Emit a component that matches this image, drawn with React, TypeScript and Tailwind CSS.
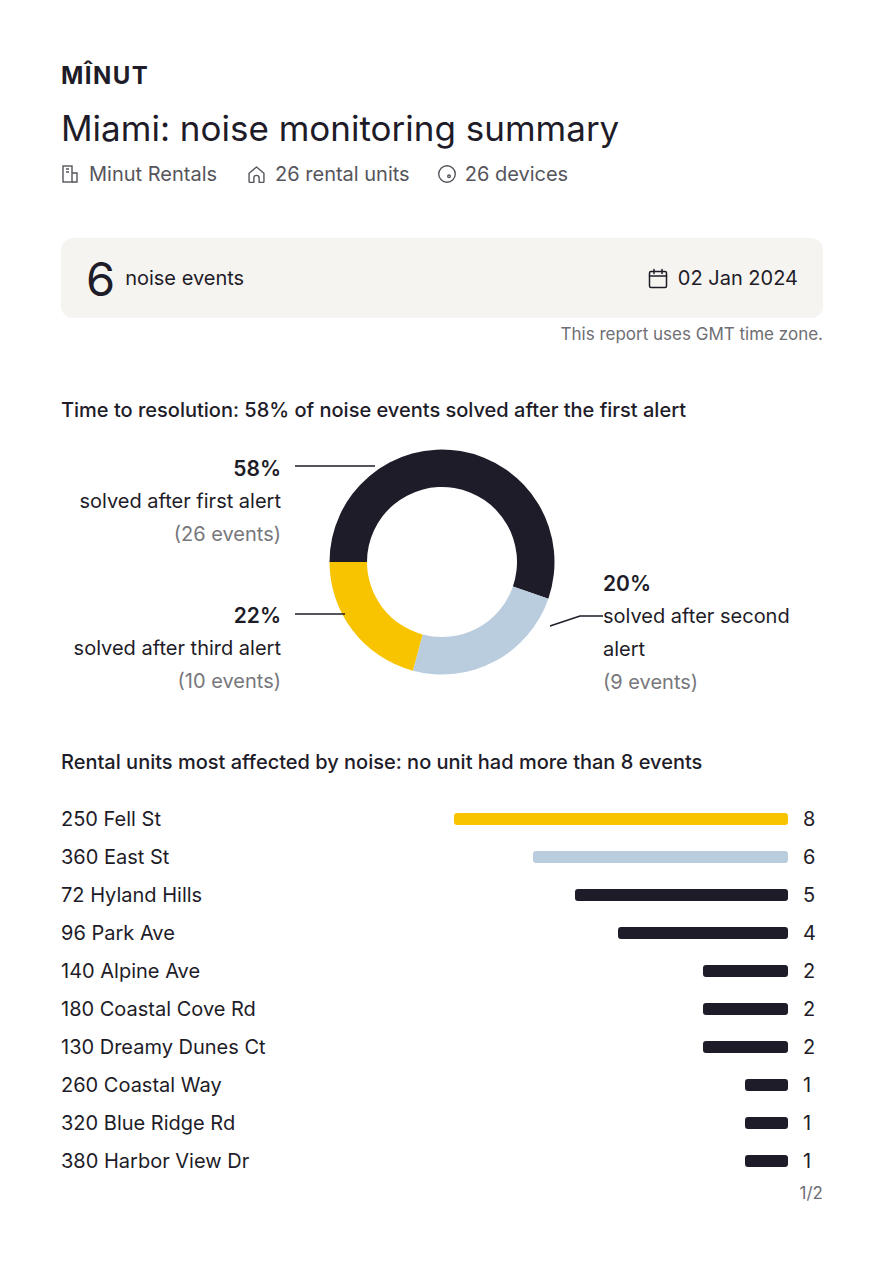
import React from 'react';

const DARK = '#1e1c28';
const YELLOW = '#f8c400';
const BLUE = '#b9cddf';

type Unit = { name: string; count: number; width: number; color: string };

// bar widths in px, measured so the longest (8) fills the track
const units: Unit[] = [
  { name: '250 Fell St', count: 8, width: 334, color: 'bg-[#f8c400]' },
  { name: '360 East St', count: 6, width: 255, color: 'bg-[#b9cddf]' },
  { name: '72 Hyland Hills', count: 5, width: 213, color: 'bg-[#1e1c28]' },
  { name: '96 Park Ave', count: 4, width: 170, color: 'bg-[#1e1c28]' },
  { name: '140 Alpine Ave', count: 2, width: 85, color: 'bg-[#1e1c28]' },
  { name: '180 Coastal Cove Rd', count: 2, width: 85, color: 'bg-[#1e1c28]' },
  { name: '130 Dreamy Dunes Ct', count: 2, width: 85, color: 'bg-[#1e1c28]' },
  { name: '260 Coastal Way', count: 1, width: 43, color: 'bg-[#1e1c28]' },
  { name: '320 Blue Ridge Rd', count: 1, width: 43, color: 'bg-[#1e1c28]' },
  { name: '380 Harbor View Dr', count: 1, width: 43, color: 'bg-[#1e1c28]' },
];

// angles in degrees, clockwise from 12 o'clock
function sector(cx: number, cy: number, r0: number, r1: number, a0: number, a1: number) {
  const p = (r: number, a: number) => {
    const rad = ((a - 90) * Math.PI) / 180;
    return `${(cx + r * Math.cos(rad)).toFixed(2)} ${(cy + r * Math.sin(rad)).toFixed(2)}`;
  };
  const large = a1 - a0 > 180 ? 1 : 0;
  return `M ${p(r1, a0)} A ${r1} ${r1} 0 ${large} 1 ${p(r1, a1)} L ${p(r0, a1)} A ${r0} ${r0} 0 ${large} 0 ${p(r0, a0)} Z`;
}

function BuildingIcon() {
  return (
    <svg width="18" height="20" viewBox="0 0 18 20" fill="none" stroke="#55555c" strokeWidth="1.4">
      <rect x="2" y="2" width="9" height="16" />
      <path d="M11 9h5v9h-5" />
      <path d="M5 5h3M5 8h3" />
    </svg>
  );
}

function HouseIcon() {
  return (
    <svg width="21" height="21" viewBox="0 0 24 24" fill="none" stroke="#55555c" strokeWidth="1.6" strokeLinejoin="round">
      <path d="M3.5 10.5 12 3.5l8.5 7V20a1 1 0 0 1-1 1H15v-5a3 3 0 0 0-6 0v5H4.5a1 1 0 0 1-1-1z" />
    </svg>
  );
}

function DeviceIcon() {
  return (
    <svg width="20" height="20" viewBox="0 0 20 20" fill="none" stroke="#55555c" strokeWidth="1.4">
      <circle cx="10" cy="10" r="8.3" />
      <circle cx="12" cy="12.3" r="1.3" />
    </svg>
  );
}

function CalendarIcon() {
  return (
    <svg width="20" height="21" viewBox="0 0 20 21" fill="none" stroke={DARK} strokeWidth="1.5" strokeLinecap="round">
      <rect x="1.5" y="3.5" width="17" height="16" rx="1.5" />
      <path d="M1.5 8h17M6 1.5v4M14 1.5v4" />
    </svg>
  );
}

function Donut() {
  const cx = 161;
  const cy = 113;
  return (
    <svg width="322" height="250" viewBox="0 0 322 250" className="shrink-0">
      <path d={sector(cx, cy, 75, 112.5, 270, 469)} fill={DARK} />
      <path d={sector(cx, cy, 75, 112.5, 109, 195)} fill={BLUE} />
      <path d={sector(cx, cy, 75, 112.5, 195, 270)} fill={YELLOW} />
      <path d="M14 17H94" stroke={DARK} strokeWidth="1.4" />
      <path d="M14 165H64" stroke={DARK} strokeWidth="1.4" />
      <path d="M269 177L299 167H322" stroke={DARK} strokeWidth="1.4" fill="none" />
    </svg>
  );
}

export default function App() {
  return (
    <div className="min-h-[1268px] w-[884px] bg-white px-[61px] pt-[62px] font-['Inter',sans-serif] text-[#1e1c28]">
      {/* logo */}
      <div className="text-[24px] font-bold leading-[28px] tracking-[0.06em]">MÎNUT</div>
      <h1 className="mt-[18px] text-[35px] font-normal leading-[40px]">Miami: noise monitoring summary</h1>
      {/* meta */}
      <div className="mt-[12px] flex items-center text-[20px] leading-[28px] text-[#55555c]">
        <span className="flex items-center gap-[10px]">
          <BuildingIcon />
          Minut Rentals
        </span>
        <span className="ml-[29px] flex items-center gap-[8px]">
          <HouseIcon />
          26 rental units
        </span>
        <span className="ml-[27px] flex items-center gap-[8px]">
          <DeviceIcon />
          26 devices
        </span>
      </div>

      {/* summary box */}
      <div className="mt-[50px] flex h-[80px] items-center justify-between rounded-[12px] bg-[#f6f4f0] px-[25px]">
        <div className="flex items-center gap-[10px]">
          <span className="text-[47px] leading-none">6</span>
          <span className="text-[20px]">noise events</span>
        </div>
        <div className="flex items-center gap-[10px] text-[20px]">
          <CalendarIcon />
          02 Jan 2024
        </div>
      </div>
      <div className="mt-[6px] text-right text-[17px] leading-[20px] text-[#6e6e73]">
        This report uses GMT time zone.
      </div>

      {/* time to resolution */}
      <h2 className="mt-[54px] text-[20px] font-medium leading-[24px]">
        Time to resolution: 58% of noise events solved after the first alert
      </h2>
      <div className="mt-[27px] flex h-[250px] items-start">
        <div className="flex w-[220px] flex-col pt-[3px] text-right text-[20px] leading-[33px]">
          <span className="text-[21px] font-semibold">58%</span>
          <span>solved after first alert</span>
          <span className="text-[#77777c]">(26 events)</span>
          <span className="mt-[48px] text-[21px] font-semibold">22%</span>
          <span>solved after third alert</span>
          <span className="text-[#77777c]">(10 events)</span>
        </div>
        <Donut />
        <div className="flex w-[200px] flex-col pt-[118px] text-[20px] leading-[33px]">
          <span className="text-[21px] font-semibold">20%</span>
          <span>solved after second alert</span>
          <span className="text-[#77777c]">(9 events)</span>
        </div>
      </div>

      {/* most affected units */}
      <h2 className="mt-[51px] text-[20px] font-medium leading-[24px]">
        Rental units most affected by noise: no unit had more than 8 events
      </h2>
      <div className="mt-[26px] flex flex-col">
        {units.map((u) => (
          <div key={u.name} className="flex h-[38px] items-center text-[20px]">
            <span className="flex-1">{u.name}</span>
            <div className={`h-[12px] rounded-[3px] ${u.color}`} style={{ width: u.width }} />
            <span className="w-[35px] pl-[15px]">{u.count}</span>
          </div>
        ))}
      </div>
      <div className="mt-[3px] text-right text-[17px] leading-[20px] text-[#6e6e73]">1/2</div>
    </div>
  );
}
